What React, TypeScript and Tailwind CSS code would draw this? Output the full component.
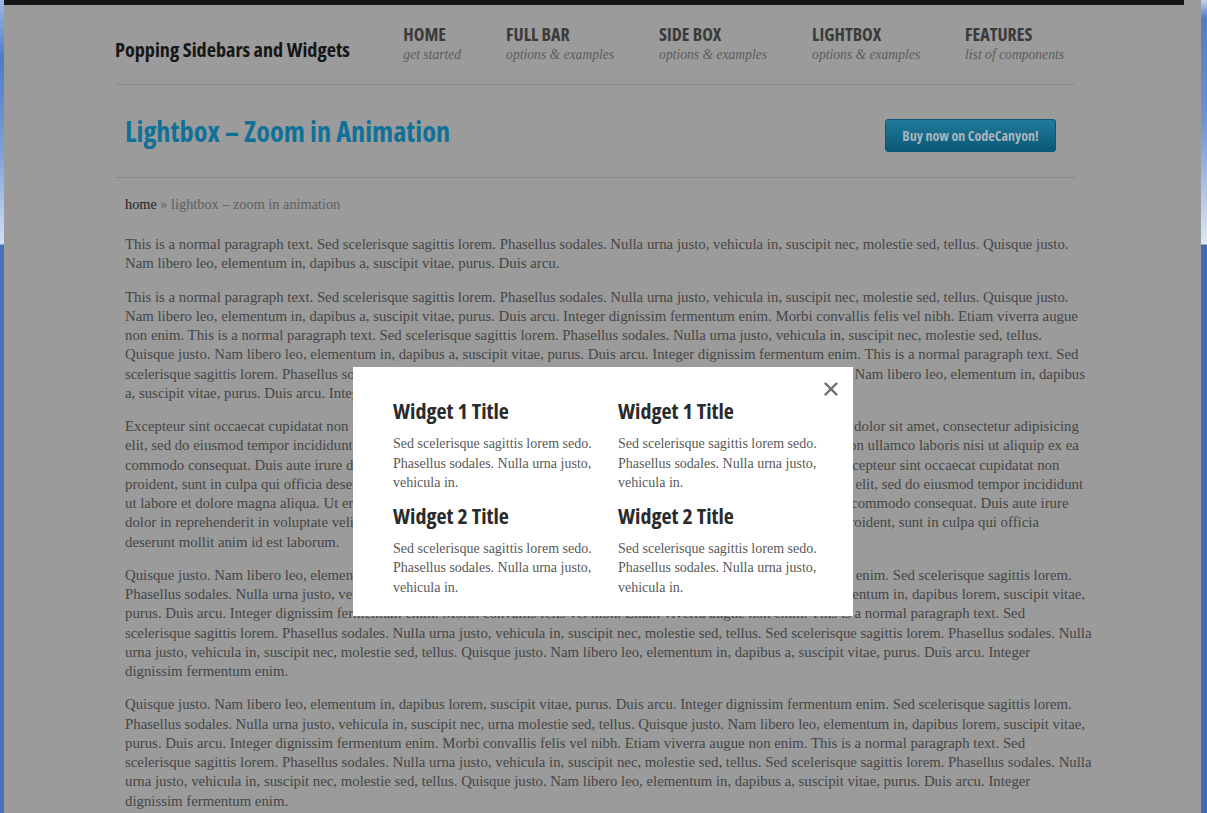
import { X } from "lucide-react";

const nav = [
  { title: "HOME", sub: "get started" },
  { title: "FULL BAR", sub: "options & examples" },
  { title: "SIDE BOX", sub: "options & examples" },
  { title: "LIGHTBOX", sub: "options & examples" },
  { title: "FEATURES", sub: "list of components" },
];

const paragraphs: string[][] = [
  [
    "This is a normal paragraph text. Sed scelerisque sagittis lorem. Phasellus sodales. Nulla urna justo, vehicula in, suscipit nec, molestie sed, tellus. Quisque justo.",
    "Nam libero leo, elementum in, dapibus a, suscipit vitae, purus. Duis arcu.",
  ],
  [
    "This is a normal paragraph text. Sed scelerisque sagittis lorem. Phasellus sodales. Nulla urna justo, vehicula in, suscipit nec, molestie sed, tellus. Quisque justo.",
    "Nam libero leo, elementum in, dapibus a, suscipit vitae, purus. Duis arcu. Integer dignissim fermentum enim. Morbi convallis felis vel nibh. Etiam viverra augue",
    "non enim. This is a normal paragraph text. Sed scelerisque sagittis lorem. Phasellus sodales. Nulla urna justo, vehicula in, suscipit nec, molestie sed, tellus.",
    "Quisque justo. Nam libero leo, elementum in, dapibus a, suscipit vitae, purus. Duis arcu. Integer dignissim fermentum enim. This is a normal paragraph text. Sed",
    "scelerisque sagittis lorem. Phasellus sodales. Nulla urna justo, vehicula in, suscipit nec, molestie sed, tellus. Quisque justo. Nam libero leo, elementum in, dapibus",
    "a, suscipit vitae, purus. Duis arcu. Integer dignissim fermentum enim.",
  ],
  [
    "Excepteur sint occaecat cupidatat non proident, sunt in culpa qui officia deserunt mollit anim id est laborum. Lorem ipsum dolor sit amet, consectetur adipisicing",
    "elit, sed do eiusmod tempor incididunt ut labore et dolore magna aliqua. Ut enim ad minim veniam, quis nostrud exercitation ullamco laboris nisi ut aliquip ex ea",
    "commodo consequat. Duis aute irure dolor in reprehenderit in voluptate velit esse cillum dolore eu fugiat nulla pariatur. Excepteur sint occaecat cupidatat non",
    "proident, sunt in culpa qui officia deserunt mollit anim id est laborum. Lorem ipsum dolor sit amet, consectetur adipisicing elit, sed do eiusmod tempor incididunt",
    "ut labore et dolore magna aliqua. Ut enim ad minim veniam, quis nostrud exercitation ullamco laboris nisi ut aliquip ex ea commodo consequat. Duis aute irure",
    "dolor in reprehenderit in voluptate velit esse cillum dolore eu fugiat nulla pariatur. Excepteur sint occaecat cupidatat non proident, sunt in culpa qui officia",
    "deserunt mollit anim id est laborum.",
  ],
  [
    "Quisque justo. Nam libero leo, elementum in, dapibus lorem, suscipit vitae, purus. Duis arcu. Integer dignissim fermentum enim. Sed scelerisque sagittis lorem.",
    "Phasellus sodales. Nulla urna justo, vehicula in, suscipit nec, urna molestie sed, tellus. Quisque justo. Nam libero leo, elementum in, dapibus lorem, suscipit vitae,",
    "purus. Duis arcu. Integer dignissim fermentum enim. Morbi convallis felis vel nibh. Etiam viverra augue non enim. This is a normal paragraph text. Sed",
    "scelerisque sagittis lorem. Phasellus sodales. Nulla urna justo, vehicula in, suscipit nec, molestie sed, tellus. Sed scelerisque sagittis lorem. Phasellus sodales. Nulla",
    "urna justo, vehicula in, suscipit nec, molestie sed, tellus. Quisque justo. Nam libero leo, elementum in, dapibus a, suscipit vitae, purus. Duis arcu. Integer",
    "dignissim fermentum enim.",
  ],
  [
    "Quisque justo. Nam libero leo, elementum in, dapibus lorem, suscipit vitae, purus. Duis arcu. Integer dignissim fermentum enim. Sed scelerisque sagittis lorem.",
    "Phasellus sodales. Nulla urna justo, vehicula in, suscipit nec, urna molestie sed, tellus. Quisque justo. Nam libero leo, elementum in, dapibus lorem, suscipit vitae,",
    "purus. Duis arcu. Integer dignissim fermentum enim. Morbi convallis felis vel nibh. Etiam viverra augue non enim. This is a normal paragraph text. Sed",
    "scelerisque sagittis lorem. Phasellus sodales. Nulla urna justo, vehicula in, suscipit nec, molestie sed, tellus. Sed scelerisque sagittis lorem. Phasellus sodales. Nulla",
    "urna justo, vehicula in, suscipit nec, molestie sed, tellus. Quisque justo. Nam libero leo, elementum in, dapibus a, suscipit vitae, purus. Duis arcu. Integer",
    "dignissim fermentum enim.",
  ],
];

const widgetText = ["Sed scelerisque sagittis lorem sedo.", "Phasellus sodales. Nulla urna justo,", "vehicula in."];

function Widget({ title }: { title: string }) {
  return (
    <div>
      <h3 className="m-0 font-['Open_Sans',sans-serif] text-[22px] leading-[24px] font-bold font-stretch-condensed text-[#2b2b2b]">{title}</h3>
      <p className="mt-[12px] mb-0 font-['Liberation_Serif',serif] text-[14px] leading-[19.6px] text-[#595959]">
        {widgetText.map((l) => (
          <span key={l} className="block whitespace-nowrap">{l}</span>
        ))}
      </p>
    </div>
  );
}

export default function App() {
  return (
    <div className="relative flex h-[813px] w-[1207px] overflow-hidden bg-[#9b9b9b]">
      {/* desktop showing through at the window edges */}
      <div className="h-full w-[4px] flex-none bg-[linear-gradient(to_bottom,#9ab8e6_0,#4f7cc4_60px,#7c9fd6_150px,#d2dff3_244px,#4a72b8_245px,#4a72b8_100%)]" />

      <div className="flex-1">
        <div className="h-[5px] w-[1180px] bg-[#161616]" />

        <div className="ml-[111px] w-[960px]">
          <header className="flex h-[80px] items-start justify-between border-b border-[#8a8a8a]">
            <div className="mt-[30px] font-['Open_Sans',sans-serif] text-[20.2px] leading-[28px] font-bold font-stretch-condensed text-[#161616]">
              Popping Sidebars and Widgets
            </div>
            <nav className="mt-[18px] flex gap-[45px] pr-[11px]">
              {nav.map((n) => (
                <div key={n.title}>
                  <div className="font-['Open_Sans',sans-serif] text-[18px] leading-[22px] font-bold font-stretch-condensed text-[#3a3a3a]">{n.title}</div>
                  <div className="mt-px font-['Liberation_Serif',serif] text-[13.6px] leading-[18px] italic text-[#5c5c5c]">{n.sub}</div>
                </div>
              ))}
            </nav>
          </header>

          <div className="flex h-[93px] items-start justify-between border-b border-[#8a8a8a] pl-[10px]">
            <h1 className="m-0 mt-[29px] font-['Open_Sans',sans-serif] text-[28.3px] leading-[34px] font-bold font-stretch-condensed text-[#0f7198]">
              Lightbox – Zoom in Animation
            </h1>
            <button className="mt-[34px] mr-[19px] flex h-[33px] w-[171px] items-center justify-center rounded-[3px] border border-[#0b5473] bg-[linear-gradient(to_bottom,#217b9b,#0a5776)] font-['Open_Sans',sans-serif] text-[14px] font-bold font-stretch-condensed text-[#a9b5bb]">
              Buy now on CodeCanyon!
            </button>
          </div>

          <div className="px-[10px] font-['Liberation_Serif',serif] text-[#454545]">
            <div className="mt-[16px] text-[14.3px] leading-[20px]">
              <span className="text-[#222]">home</span>
              <span className="text-[#5e5e5e]"> » lightbox – zoom in animation</span>
            </div>
            <div className="mt-[21px] text-[14.8px] leading-[19.25px]">
              {paragraphs.map((p, i) => (
                <p key={i} className="m-0 mb-[14px]">
                  {p.map((l, j) => (
                    <span key={j} className="block whitespace-nowrap">{l}</span>
                  ))}
                </p>
              ))}
            </div>
          </div>
        </div>
      </div>

      <div className="h-full w-[6px] flex-none bg-[linear-gradient(to_bottom,#c3d3ee_0,#4f7cc4_18px,#6d93d0_120px,#e0e8f6_244px,#3f6bb5_245px,#3f6bb5_100%)]" />

      {/* lightbox */}
      <div className="absolute top-[367px] left-[353px] h-[249px] w-[500px] bg-white pt-[31px] pl-[40px]">
        <button className="absolute top-[11px] left-[467px] text-[#6b6b6b]">
          <X size={22} strokeWidth={2.6} />
        </button>
        <div className="grid grid-cols-[225px_225px]">
          {[0, 1].map((c) => (
            <div key={c} className="flex flex-col gap-[10px]">
              <Widget title="Widget 1 Title" />
              <Widget title="Widget 2 Title" />
            </div>
          ))}
        </div>
      </div>
    </div>
  );
}
